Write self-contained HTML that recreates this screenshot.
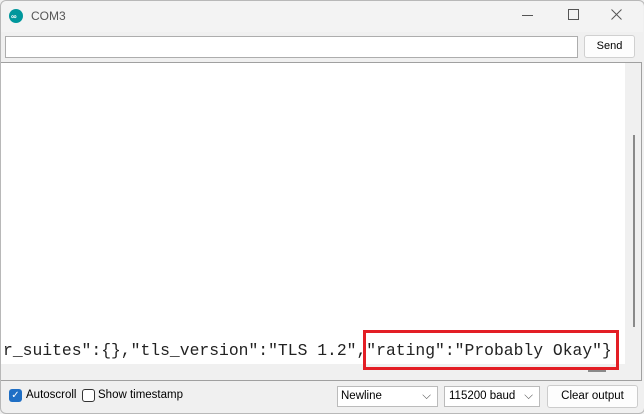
<!DOCTYPE html><html><head><style>
body{margin:0;width:644px;height:413px;overflow:hidden;background:#f0f0f0;font-family:"Liberation Sans",sans-serif;font-size:12px;position:relative}
.a{position:absolute;white-space:nowrap}
</style></head><body>
<div class="a" style="left:0;top:0;width:643px;height:412px;border:1px solid #b8b8b8;border-radius:6px;background:#f0f0f0"></div>
<div class="a" style="left:1px;top:1px;width:642px;height:31px;background:#f3f3f3;border-radius:6px 6px 0 0"></div>
<div class="a" style="left:9px;top:9px;width:14px;height:14px;border-radius:50%;background:#00979c"></div>
<div class="a" style="left:11px;top:12px;color:#fff;font-size:8px;font-weight:bold;letter-spacing:-1px">∞</div>
<div class="a" style="left:31px;top:9px;color:#555;font-size:12px">COM3</div>
<div class="a" style="left:522px;top:15px;width:11px;height:1px;background:#555"></div>
<div class="a" style="left:568px;top:9px;width:9px;height:9px;border:1px solid #555"></div>
<svg class="a" style="left:611px;top:9px" width="11" height="11"><path d="M0.5 0.5L10.5 10.5M10.5 0.5L0.5 10.5" stroke="#555" stroke-width="1"/></svg>
<div class="a" style="left:5px;top:36px;width:571px;height:20px;background:#fff;border:1px solid #adadad"></div>
<div class="a" style="left:584px;top:35px;width:49px;height:21px;background:#fdfdfd;border:1px solid #d0d0d0;border-radius:3px;text-align:center;line-height:21px;font-size:11px">Send</div>
<div class="a" style="left:1px;top:62px;width:640px;height:317px;border:1px solid #a0a0a0;border-left:0;background:#f0f0f0"></div>
<div class="a" style="left:1px;top:63px;width:624px;height:301px;background:#fff"></div>
<div class="a" style="left:633px;top:135px;width:2px;height:192px;background:#8a8a8a"></div>
<div class="a" style="left:588px;top:370px;width:18px;height:2px;background:#8a8a8a"></div>
<div class="a" style="left:3px;top:341px;font-family:'Liberation Mono',monospace;font-size:16.3px;color:#222;transform:scaleX(1.005);transform-origin:left">r_suites":{},"tls_version":"TLS 1.2","rating":"Probably Okay"}</div>
<div class="a" style="left:363px;top:330px;width:250px;height:34px;border:3px solid #e31e25"></div>
<div class="a" style="left:9px;top:389px;width:13px;height:13px;background:#1f6fc5;border-radius:3px;color:#fff;font-size:10px;line-height:13px;text-align:center">✓</div>
<div class="a" style="left:26px;top:389px;font-size:11.5px">Autoscroll</div>
<div class="a" style="left:82px;top:389px;width:11px;height:11px;border:1px solid #333;border-radius:3px;background:#fff"></div>
<div class="a" style="left:98px;top:389px;font-size:11.5px">Show timestamp</div>
<div class="a" style="left:337px;top:386px;width:96px;height:19px;border:1px solid #bbb;background:#fff;font-size:11.5px;line-height:19px;padding-left:3px">Newline<span style="position:absolute;right:6px;color:#555">⌵</span></div>
<div class="a" style="left:444px;top:386px;width:90px;height:19px;border:1px solid #bbb;background:#fff;font-size:11.5px;line-height:19px;padding-left:4px">115200 baud<span style="position:absolute;right:6px;color:#555">⌵</span></div>
<div class="a" style="left:547px;top:385px;width:89px;height:21px;border:1px solid #ccc;border-radius:3px;background:#fdfdfd;font-size:11.5px;line-height:21px;text-align:center">Clear output</div>
</body></html>
